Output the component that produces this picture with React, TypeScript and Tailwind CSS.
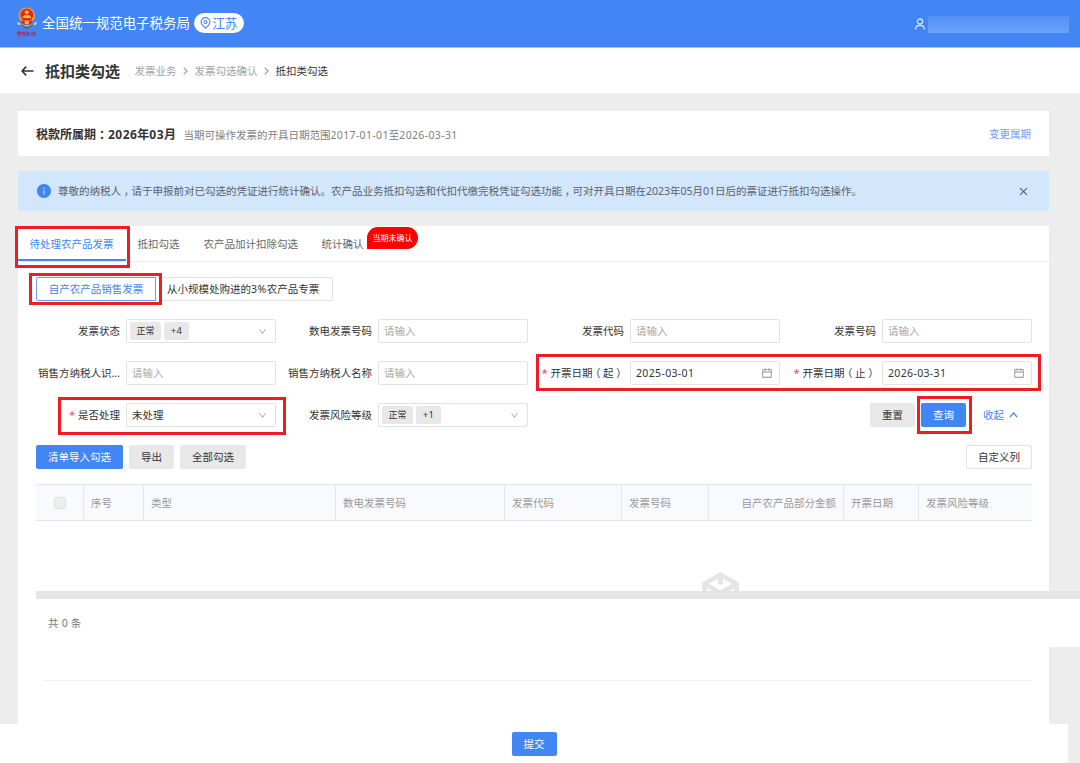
import type { ReactNode } from 'react';
import {
  AiFillInfoCircle,
  AiOutlineCalendar,
  AiOutlineClose,
  AiOutlineDown,
} from 'react-icons/ai';
import { clsx } from 'clsx';

interface Field {
  label: ReactNode;
  id: string;
  type: 'input' | 'tags' | 'select' | 'date';
  required?: boolean;
  value?: string;
  tags?: string[];
}

const FIELDS: Field[] = [
  { id: 'status', label: '发票状态', type: 'tags', tags: ['正常', '+4'] },
  { id: 'eNo', label: '数电发票号码', type: 'input' },
  { id: 'code', label: '发票代码', type: 'input' },
  { id: 'no', label: '发票号码', type: 'input' },
  { id: 'sellerId', label: '销售方纳税人识...', type: 'input' },
  { id: 'sellerName', label: '销售方纳税人名称', type: 'input' },
  { id: 'from', label: <DateLabel edge="起" />, type: 'date', required: true, value: '2025-03-01' },
  { id: 'to', label: <DateLabel edge="止" />, type: 'date', required: true, value: '2026-03-31' },
  { id: 'handled', label: '是否处理', type: 'select', required: true, value: '未处理' },
  { id: 'risk', label: '发票风险等级', type: 'tags', tags: ['正常', '+1'] },
];

const COLUMNS = [
  { title: '序号', className: 'w-[60px]' },
  { title: '类型', className: 'w-[192px]' },
  { title: '数电发票号码', className: 'w-[169px]' },
  { title: '发票代码', className: 'w-[117px]' },
  { title: '发票号码', className: 'w-[87px]' },
  { title: '自产农产品部分金额', className: 'w-[135px] justify-end' },
  { title: '开票日期', className: 'w-[75px]' },
  { title: '发票风险等级', className: 'flex-1' },
];

// full-width punctuation centred in its cell
function Punct({ children }: { children: ReactNode }) {
  return <span className="px-[0.25em] [font-feature-settings:'halt']">{children}</span>;
}

function Num({ children }: { children: ReactNode }) {
  return <span className="tracking-[0.35px]">{children}</span>;
}

function DateLabel({ edge }: { edge: string }) {
  return (
    <>
      开票日期<Punct>（</Punct>
      {edge}
      <Punct>）</Punct>
    </>
  );
}

function Highlight({ className }: { className: string }) {
  return <div className={clsx('pointer-events-none absolute z-10 border-[3px] border-[#ee1c25]', className)} />;
}

function Emblem() {
  return (
    <svg width="22" height="31" viewBox="0 0 22 31" className="shrink-0">
      <path d="M0.8 14.5 Q2 20 10.8 21.5 Q20 20 21.2 14.5 L18 16.5 Q11 20.5 4 16.5 Z" fill="#dfe3e8" />
      <path d="M3 18.5 L10.8 22.6 L19 18.5 L17.5 17 L10.8 19.5 L4.5 17 Z" fill="#626a78" />
      <circle cx="10.8" cy="8.6" r="8.2" fill="#e9a13a" />
      <circle cx="10.8" cy="8" r="6.5" fill="#e5281d" />
      <path d="M10.8 2.6 l0.8 1.8 2 .1 -1.6 1.2 .6 1.9 -1.8 -1.1 -1.8 1.1 .6 -1.9 -1.6 -1.2 2 -.1z" fill="#ffd84a" />
      <path d="M6.5 11 h8.6 v-1.5 h-1.6 v-1.2 h-5.4 v1.2 h-1.6z" fill="#f9c23c" />
      <path d="M5 13 Q10.8 16.5 16.6 13 L15.5 16.5 Q10.8 18.5 6.1 16.5 Z" fill="#d6281f" />
      <path d="M8.8 13.5 h4 v3.6 h-4z" fill="#f3b73a" />
      <g fill="none" stroke="#b32b4c" strokeWidth="0.9">
        <path d="M1.2 25.3 h4 v1.8 h-4z M3.2 23.5 v6.5" />
        <path d="M6.6 25.2 h3.2 v3.2 h-3.2z M7.3 26.8 h2" />
        <path d="M11.6 24.6 v4.2 M10.9 26.2 l2.8 -.4 M13.2 25 l-.6 3.8 1.8 -.3" />
        <path d="M15.8 24.8 l.5 3.6 M15.4 26.3 h4.4 M18.2 24.5 v4.1 h1.8" />
      </g>
    </svg>
  );
}

function UserIcon({ className }: { className: string }) {
  return (
    <svg width="10" height="12" viewBox="0 0 10 12" fill="none" stroke="currentColor" strokeWidth="1.2" className={className}>
      <circle cx="5" cy="3.4" r="2.6" />
      <path d="M0.8 11.4 V10.6 C0.8 8.6 2.6 7.4 5 7.4 S9.2 8.6 9.2 10.6 V11.4" />
    </svg>
  );
}

function CrumbArrow() {
  return (
    <svg width="5" height="8" viewBox="0 0 5 8" fill="none" stroke="#999" strokeWidth="1.1" className="mx-[6.5px]">
      <path d="M0.7 0.7 L4.1 4 L0.7 7.3" />
    </svg>
  );
}

function FieldControl({ field }: { field: Field }) {
  return (
    <div className="flex h-6 w-[150px] items-center rounded-[2px] border border-[#e2e2e2] bg-white text-[#333]">
      {field.type === 'tags' && (
        <div className="flex gap-[3px] pl-[3px] text-[9px]">
          {field.tags?.map((tag, i) => (
            <span
              key={tag}
              className={clsx(
                'flex h-[18px] items-center justify-center rounded-[2px] bg-[#e8e8e8]',
                i === 0 ? 'w-[31px]' : 'w-[25px] text-[9.5px] tracking-[0.4px]',
              )}
            >
              {tag}
            </span>
          ))}
        </div>
      )}
      {field.type === 'input' && <span className="pl-[5px] text-[#a6a6a6]">请输入</span>}
      {field.type === 'select' && <span className="pl-[5px]">{field.value}</span>}
      {field.type === 'date' && (
        <span className="pl-[5px]">
          <Num>{field.value}</Num>
        </span>
      )}
      {(field.type === 'tags' || field.type === 'select') && (
        <AiOutlineDown className="mr-2 ml-auto h-[9px] w-[9px] text-[#999]" />
      )}
      {field.type === 'date' && <AiOutlineCalendar className="mr-1.5 ml-auto h-3 w-3 text-[#8c8c8c]" />}
    </div>
  );
}

function Header() {
  return (
    <header className="flex h-12 items-center border-b border-[#a6c6fa] bg-[#4285f5] pl-4 text-white">
      <div className="-mt-[3px]">
        <Emblem />
      </div>
      <span className="-mt-0.5 ml-1 text-[13.45px]">全国统一规范电子税务局</span>
      <span className="-mt-0.5 ml-1 flex h-5 w-[50px] items-center justify-center rounded-full bg-white text-[12.7px] text-[#4285f5]">
        <svg width="11" height="12" viewBox="0 0 11 12" fill="none" stroke="currentColor" strokeWidth="1.1" className="mr-px">
          <path d="M5.5 11.2 C3 9 1.1 7.2 1.1 4.9 a4.4 4.3 0 0 1 8.8 0 C9.9 7.2 8 9 5.5 11.2z" />
          <circle cx="5.5" cy="5" r="1.5" />
        </svg>
        江苏
      </span>
      <UserIcon className="ml-auto text-[#e3edfe]" />
      <div className="mt-0.5 mr-[11px] ml-[3px] h-[17px] w-[141px] bg-linear-to-b from-[#5290f6] to-[#6ca2f8]" />
    </header>
  );
}

function Breadcrumb() {
  return (
    <div className="flex h-[45px] items-center bg-white pl-[21px] text-[#a2a2a2]">
      <svg width="13" height="10" viewBox="0 0 13 10" fill="none" stroke="#333" strokeWidth="1.6">
        <path d="M5.2 0.6 L1 5 L5.2 9.4 M1 5 H12.6" />
      </svg>
      <h1 className="ml-[11px] text-[15px] font-bold text-[#333]">抵扣类勾选</h1>
      <span className="ml-[14.5px]">发票业务</span>
      <CrumbArrow />
      <span>发票勾选确认</span>
      <CrumbArrow />
      <span className="text-[#333]">抵扣类勾选</span>
    </div>
  );
}

function Tabs() {
  return (
    <div className="flex h-9 border-b border-[#ececec] text-[#666]">
      <div className="flex w-[108px] items-center justify-center border-b-2 border-[#4285f5] pt-0.5 pr-px text-[#4285f5]">
        待处理农产品发票
      </div>
      <div className="flex items-center pl-[11.5px]">抵扣勾选</div>
      <div className="flex items-center pl-6">农产品加计扣除勾选</div>
      <div className="flex items-center pl-[23.5px]">统计确认</div>
      <span className="mt-[1px] ml-[3.5px] flex h-[22px] w-[51px] items-center justify-center rounded-full rounded-bl-none bg-[#fe0000] text-[8px] text-white">
        当期未确认
      </span>
    </div>
  );
}

function EmptyIcon() {
  return (
    <svg width="37" height="42" viewBox="0 0 37 42" className="shrink-0">
      <path d="M18.5 0 L37 10.5 V31.5 L18.5 42 L0 31.5 V10.5 Z" fill="#e5e5e5" />
      <path d="M18.5 5.2 L30 11.8 L18.5 18.4 L7 11.8 Z" fill="#fff" />
      <path d="M16 4 h5 v8.5 h-5z" fill="#e5e5e5" />
      <path d="M5 16 L16 22.5 V34.5 L5 28.3 Z M32 16 L21 22.5 V34.5 L32 28.3 Z" fill="#fff" />
    </svg>
  );
}

export default function App() {
  return (
    <div className="relative flex h-[763px] w-[1080px] flex-col overflow-hidden bg-[#ededed] font-['Noto_Sans','Noto_Sans_CJK_SC',sans-serif] text-[10.5px] leading-[16px] whitespace-nowrap">
      <Header />
      <Breadcrumb />

      <section className="mt-[18px] mr-[31px] ml-[18px] flex h-[45px] shrink-0 items-center bg-white px-[18px]">
        <span className="pt-0.5 text-[12px] font-bold text-[#333]">
          税款所属期<Punct>：</Punct>
          <span className="tracking-[0.45px]">2026</span>年<span className="tracking-[0.45px]">03</span>月
        </span>
        <span className="ml-[7.5px] pt-0.5 text-[#808080]">
          当期可操作发票的开具日期范围<Num>2017-01-01</Num>至<Num>2026-03-31</Num>
        </span>
        <a className="ml-auto text-[#6da0f5]">变更属期</a>
      </section>

      <section className="mt-[15px] mr-[31px] ml-[18px] flex h-10 shrink-0 items-center bg-[#d2e6fc] pl-[18px] text-[#5a626d]">
        <AiFillInfoCircle className="h-4 w-4 text-[#4285f5]" />
        <p className="ml-1.5">
          尊敬的纳税人<Punct>，</Punct>请于申报前对已勾选的凭证进行统计确认。农产品业务抵扣勾选和代扣代缴完税凭证勾选功能
          <Punct>，</Punct>可对开具日期在2023年05月01日后的票证进行抵扣勾选操作。
        </p>
        <AiOutlineClose className="mr-5 ml-auto h-[11px] w-[11px] text-[#444]" />
      </section>

      <main className="mt-[15px] ml-[18px] flex h-[498px] w-[1031px] shrink-0 flex-col bg-white">
        <Tabs />

        <div className="mt-[15px] ml-[18px] flex h-6 shrink-0">
          <div className="flex w-[120px] items-center justify-center rounded-l-[2px] border border-[#6a9ff6] text-[#4285f5]">
            自产农产品销售发票
          </div>
          <div className="flex w-[177px] items-center rounded-r-[2px] border border-l-0 border-[#e2e2e2] pl-[11px] text-[#333]">
            从小规模处购进的<span className="tracking-[0.5px]">3%</span>农产品专票
          </div>
        </div>

        <div className="mt-[18px] ml-1.5 grid grid-cols-[repeat(4,252px)] gap-y-[18px]">
          {FIELDS.map((field) => (
            <div key={field.id} className="flex items-center justify-end gap-1.5">
              <label className="text-[#333]">
                {field.required && <span className="mr-[3px] text-[#f5484e]">*</span>}
                {field.label}
              </label>
              <FieldControl field={field} />
            </div>
          ))}
          <div className="col-span-2 flex items-center justify-end gap-1.5 pr-3.5">
            <button className="h-6 w-[45px] rounded-[2px] bg-[#e8e8e8] text-[#333]">重置</button>
            <button className="h-6 w-[45px] rounded-[2px] bg-[#4285f5] text-white">查询</button>
            <a className="ml-[11px] flex items-center gap-[5px] text-[#4285f5]">
              收起
              <svg width="9" height="6" viewBox="0 0 9 6" fill="none" stroke="currentColor" strokeWidth="1.2">
                <path d="M0.8 5.2 L4.5 1 L8.2 5.2" />
              </svg>
            </a>
          </div>
        </div>

        <div className="mt-[18px] mr-[17px] ml-[18px] flex h-6 shrink-0 gap-1.5 text-[#333]">
          <button className="w-[87px] rounded-[2px] bg-[#4285f5] text-white">清单导入勾选</button>
          <button className="w-[45px] rounded-[2px] bg-[#e8e8e8]">导出</button>
          <button className="w-[66px] rounded-[2px] bg-[#e8e8e8]">全部勾选</button>
          <button className="ml-auto w-[66px] rounded-[2px] border border-[#e2e2e2]">自定义列</button>
        </div>

        <div className="mt-[15px] mr-[17px] ml-[18px] flex h-[37px] shrink-0 border-y border-[#e4e5e8] bg-[#f9fafe] text-[#999]">
          <div className="flex w-[47px] items-center justify-center">
            <span className="h-3 w-3 rounded-[2px] border border-[#e0e0e0] bg-[#eee]" />
          </div>
          {COLUMNS.map((col) => (
            <div
              key={col.title}
              className={clsx('flex items-center border-l border-[#e4e5e8] px-[7px]', col.className)}
            >
              {col.title}
            </div>
          ))}
        </div>

        <div className="mr-[17px] ml-[18px] flex h-[70px] shrink-0 justify-center overflow-hidden pt-[51px] pl-[373px]">
          <EmptyIcon />
        </div>

        {/* horizontal scrollbar and pager run past the right edge of the panel */}
        <div className="ml-[18px] h-2 w-[1044px] shrink-0 bg-[#e5e5e5]" />
        <div className="h-12 w-[1062px] shrink-0 bg-white pt-4 pl-[30px] tracking-[0.2px] text-[#777]">共 0 条</div>
        <div className="mt-[33px] mr-[17px] ml-[25px] h-px shrink-0 bg-[#efefef]" />
      </main>

      <footer className="flex h-[39px] w-[1068px] shrink-0 items-center justify-center bg-white">
        <button className="h-6 w-[45px] rounded-[2px] bg-[#4285f5] text-white">提交</button>
      </footer>

      <Highlight className="top-[226px] left-[15px] h-[42px] w-[115px]" />
      <Highlight className="top-[273px] left-[29px] h-[32px] w-[133px]" />
      <Highlight className="top-[354px] left-[536px] h-[37px] w-[505px]" />
      <Highlight className="top-[397px] left-[58px] h-[38px] w-[228px]" />
      <Highlight className="top-[396px] left-[917px] h-[38px] w-[55px]" />
    </div>
  );
}
